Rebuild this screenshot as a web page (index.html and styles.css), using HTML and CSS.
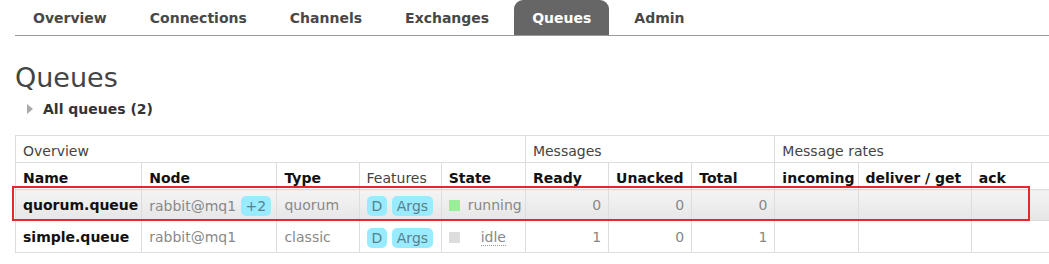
FILE: index.html
```html
<!DOCTYPE html>
<html>

<head>
  <meta charset="UTF-8" />
  <title>RabbitMQ Management</title>
  <link rel="stylesheet" href="styles.css">
</head>

<body>
  <div class="tabs">
    <a class="tab">Overview</a>
    <a class="tab">Connections</a>
    <a class="tab">Channels</a>
    <a class="tab">Exchanges</a>
    <a class="tab active">Queues</a>
    <a class="tab">Admin</a>
  </div>

  <h1>Queues</h1>
  <div class="section-toggle">
    <span class="arrow"></span>
    <span>All queues (2)</span>
  </div>

  <div class="table-wrap">
    <table class="list">
      <colgroup>
        <col class="c-name"><col class="c-node"><col class="c-type"><col class="c-feat"><col class="c-state">
        <col class="c-num"><col class="c-num"><col class="c-num">
        <col class="c-rate"><col class="c-rate2"><col class="c-ack">
      </colgroup>
      <thead>
        <tr class="group">
          <th colspan="5">Overview</th>
          <th colspan="3">Messages</th>
          <th colspan="3">Message rates</th>
        </tr>
        <tr class="cols">
          <th>Name</th>
          <th>Node</th>
          <th>Type</th>
          <th class="plain">Features</th>
          <th>State</th>
          <th>Ready</th>
          <th>Unacked</th>
          <th>Total</th>
          <th>incoming</th>
          <th>deliver / get</th>
          <th>ack</th>
        </tr>
      </thead>
      <tbody>
        <tr class="alt">
          <td class="name">quorum.queue</td>
          <td class="muted">rabbit@mq1 <span class="badge">+2</span></td>
          <td class="muted">quorum</td>
          <td><span class="badge">D</span> <span class="badge">Args</span></td>
          <td class="muted"><span class="dot green"></span>running</td>
          <td class="num">0</td>
          <td class="num">0</td>
          <td class="num">0</td>
          <td></td>
          <td></td>
          <td></td>
        </tr>
        <tr>
          <td class="name">simple.queue</td>
          <td class="muted">rabbit@mq1</td>
          <td class="muted">classic</td>
          <td><span class="badge">D</span> <span class="badge">Args</span></td>
          <td class="muted"><span class="dot grey"></span><abbr class="idle">idle</abbr></td>
          <td class="num">1</td>
          <td class="num">0</td>
          <td class="num">1</td>
          <td></td>
          <td></td>
          <td></td>
        </tr>
      </tbody>
    </table>
    <div class="highlight"></div>
  </div>
</body>

</html>
```

FILE: styles.css
```css
/* Reset */
* {
  margin: 0;
  padding: 0;
  box-sizing: border-box;
}

body {
  font-family: "DejaVu Sans", Verdana, sans-serif;
  font-size: 14px;
  color: #484848;
  background: #fff;
  padding-left: 15px;
  overflow: hidden;
  width: 1049px;
  height: 264px;
}

/* Top tabs */
.tabs {
  display: flex;
  gap: 7px;
  height: 36px;
  border-bottom: 1px solid #999;
}

.tab {
  display: flex;
  align-items: center;
  padding: 0 18px;
  font-weight: bold;
  font-size: 14px;
  color: #484848;
  border-radius: 9px 9px 0 0;
}

.tab.active {
  background-color: #666;
  color: #fff;
}

/* Heading */
h1 {
  font-size: 27px;
  font-weight: normal;
  color: #444;
  margin-top: 25px;
  line-height: 34px;
}

.section-toggle {
  display: flex;
  align-items: center;
  gap: 10px;
  margin-top: 4px;
  padding-left: 12px;
  font-weight: bold;
  color: #333;
  height: 20px;
}

.arrow {
  width: 0;
  height: 0;
  border-top: 5px solid transparent;
  border-bottom: 5px solid transparent;
  border-left: 6px solid #aaa;
}

/* Queue table */
.table-wrap {
  position: relative;
  margin-top: 16px;
  width: 1034px;
}

.table-wrap table {
  margin-right: -100px;
}

table.list {
  border-collapse: collapse;
  table-layout: fixed;
  width: 1100px;
  border: 1px solid #ddd;
}

.c-name { width: 126px; }
.c-node { width: 135px; }
.c-type { width: 82px; }
.c-feat { width: 82px; }
.c-state { width: 84px; }
.c-num { width: 83px; }
.c-rate { width: 83px; }
.c-rate2 { width: 113px; }
.c-ack { width: 143px; }

th, td {
  border: 1px solid #ddd;
  padding: 0 7px;
  text-align: left;
  white-space: nowrap;
}

tr.group th {
  font-weight: normal;
  color: #444;
  height: 27px;
  padding-top: 3px;
}

tr.cols th {
  font-weight: bold;
  color: #111;
  height: 27px;
  padding-top: 3px;
}

tr.cols th.plain {
  font-weight: normal;
  color: #444;
}

td {
  height: 31px;
}

tbody tr.alt td {
  background: linear-gradient(#f4f4f4, #e6e6e6);
}

tbody tr:last-child td {
  height: 32px;
}

td.name {
  font-weight: bold;
  color: #111;
}

td.muted {
  color: #888;
}

td.num {
  text-align: right;
  color: #888;
}

.badge {
  display: inline-block;
  background-color: #99ebff;
  color: #5a7f8a;
  border-radius: 5px;
  padding: 2px 5px;
  margin-top: 2px;
}

.dot {
  display: inline-block;
  width: 11px;
  height: 11px;
  margin-right: 8px;
  vertical-align: -1px;
}

.dot.green {
  background-color: #99ee99;
}

.dot.grey {
  background-color: #ddd;
}

abbr.idle {
  text-decoration: none;
  border-bottom: 1px dotted #999;
  margin-left: 13px;
}

/* Red annotation box over the first row */
.highlight {
  position: absolute;
  left: -3px;
  top: 51px;
  width: 1018px;
  height: 35px;
  border: 2px solid #e8262d;
  pointer-events: none;
}
```
